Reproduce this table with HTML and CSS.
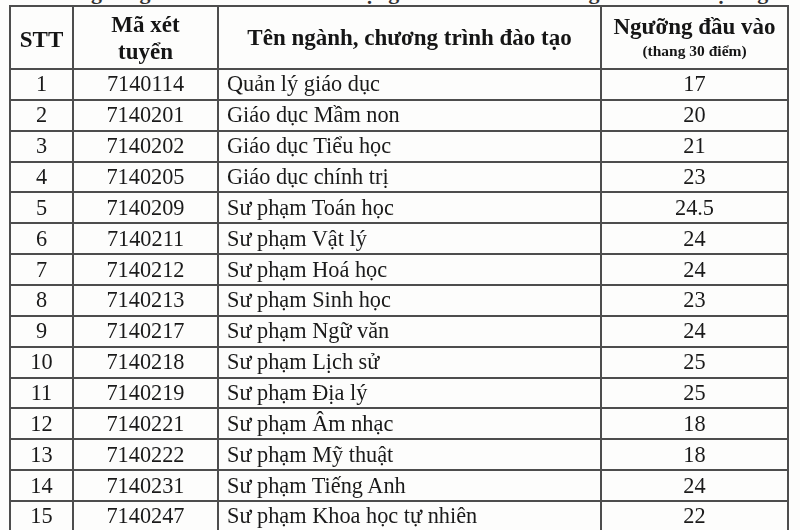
FILE: index.html
```html
<!DOCTYPE html>
<html lang="vi">
<head>
<meta charset="utf-8">
<title>Ngưỡng đầu vào</title>
<link rel="stylesheet" href="styles.css">
</head>
<body>
<div class="page">
  <div class="cut"><span class="cut-text">2. Ngưỡng đảm bảo chất lượng đầu vào các ngành đào tạo giáo viên trình độ đại học chính quy</span></div>
  <table class="grid">
    <colgroup>
      <col class="c-stt"><col class="c-code"><col class="c-name"><col class="c-score">
    </colgroup>
    <thead>
      <tr class="head">
        <th class="stt">STT</th>
        <th>Mã xét<br>tuyển</th>
        <th class="name-h">Tên ngành, chương trình đào tạo</th>
        <th class="score-h">Ngưỡng đầu vào<span class="sub">(thang 30 điểm)</span></th>
      </tr>
    </thead>
    <tbody>
      <tr><td>1</td><td>7140114</td><td class="name">Quản lý giáo dục</td><td>17</td></tr>
      <tr><td>2</td><td>7140201</td><td class="name">Giáo dục Mầm non</td><td>20</td></tr>
      <tr><td>3</td><td>7140202</td><td class="name">Giáo dục Tiểu học</td><td>21</td></tr>
      <tr><td>4</td><td>7140205</td><td class="name">Giáo dục chính trị</td><td>23</td></tr>
      <tr><td>5</td><td>7140209</td><td class="name">Sư phạm Toán học</td><td>24.5</td></tr>
      <tr><td>6</td><td>7140211</td><td class="name">Sư phạm Vật lý</td><td>24</td></tr>
      <tr><td>7</td><td>7140212</td><td class="name">Sư phạm Hoá học</td><td>24</td></tr>
      <tr><td>8</td><td>7140213</td><td class="name">Sư phạm Sinh học</td><td>23</td></tr>
      <tr><td>9</td><td>7140217</td><td class="name">Sư phạm Ngữ văn</td><td>24</td></tr>
      <tr><td>10</td><td>7140218</td><td class="name">Sư phạm Lịch sử</td><td>25</td></tr>
      <tr><td>11</td><td>7140219</td><td class="name">Sư phạm Địa lý</td><td>25</td></tr>
      <tr><td>12</td><td>7140221</td><td class="name">Sư phạm Âm nhạc</td><td>18</td></tr>
      <tr><td>13</td><td>7140222</td><td class="name">Sư phạm Mỹ thuật</td><td>18</td></tr>
      <tr><td>14</td><td>7140231</td><td class="name">Sư phạm Tiếng Anh</td><td>24</td></tr>
      <tr><td>15</td><td>7140247</td><td class="name">Sư phạm Khoa học tự nhiên</td><td>22</td></tr>
    </tbody>
  </table>
</div>
</body>
</html>
```

FILE: styles.css
```css
html, body {
  margin: 0;
  padding: 0;
  background: #fdfdfc;
  overflow: hidden;
}

.page {
  width: 800px;
  height: 530px;
  overflow: hidden;
  padding-left: 9px;
  box-sizing: border-box;
  font-family: "Liberation Serif", "Times New Roman", serif;
  color: #1a1a1a;
}

.cut {
  height: 5px;
  overflow: hidden;
  padding-left: 30px;
}

.cut-text {
  display: block;
  font-weight: bold;
  font-size: 22px;
  line-height: 22px;
  white-space: nowrap;
  word-spacing: 14px;
  margin-top: -19px;
  color: #333;
}

.grid {
  border-collapse: collapse;
  table-layout: fixed;
  width: 779px;
  filter: blur(0.35px);
}

.c-stt { width: 63px; }
.c-code { width: 145px; }
.c-name { width: 383px; }
.c-score { width: 187px; }

.grid th,
.grid td {
  border: 2px solid #4d4d4d;
  padding: 0;
  text-align: center;
  vertical-align: middle;
}

.head th {
  height: 57px;
  font-weight: bold;
  font-size: 23px;
  line-height: 27px;
  color: #151515;
}

.head .stt {
  padding-top: 4px;
}

.head .score-h {
  font-size: 23px;
  line-height: 24px;
}

.sub {
  display: block;
  font-size: 15.5px;
  line-height: 18px;
  padding-top: 3px;
}

.grid td {
  height: 28.86px;
  font-size: 22.3px;
  line-height: 24px;
}

.grid td.name {
  text-align: left;
  padding-left: 8px;
}
```
